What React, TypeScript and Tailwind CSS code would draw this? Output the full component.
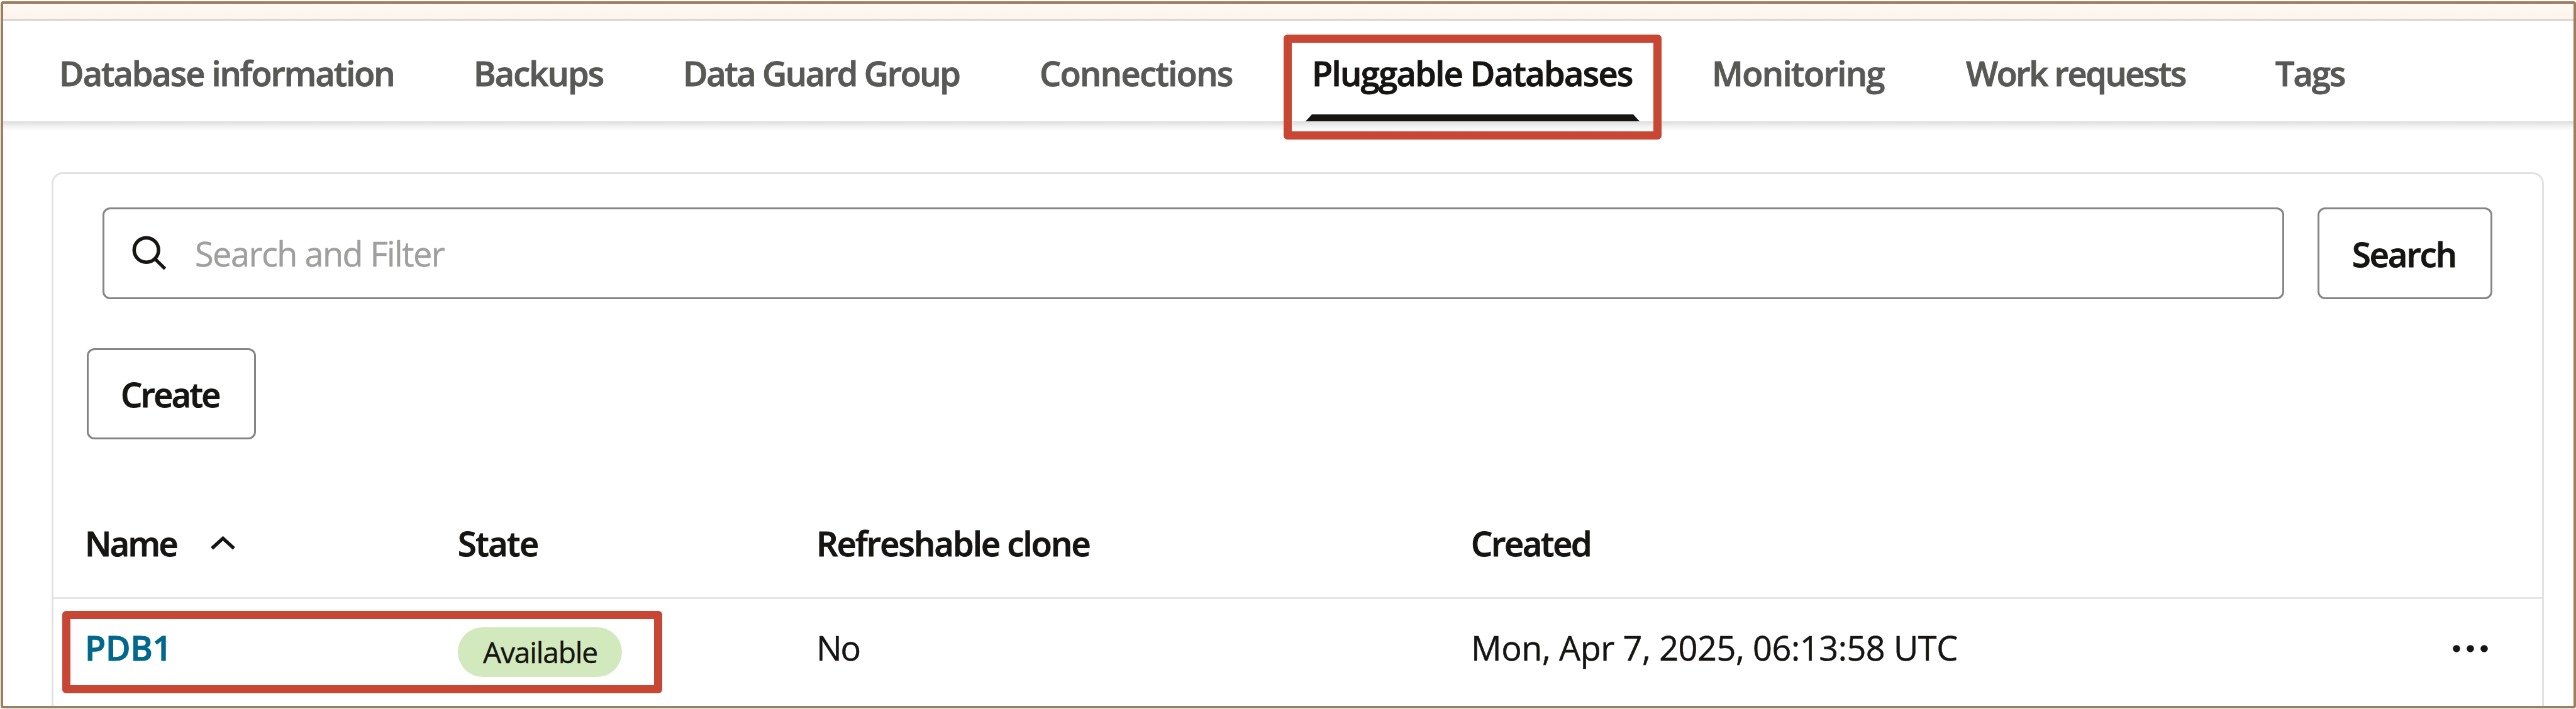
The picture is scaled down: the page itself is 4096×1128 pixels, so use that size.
const tabs = [
  { label: "Database information", style: "w-[659px] tracking-[-1.95px]" },
  { label: "Backups", style: "w-[333px] tracking-[-1.8px]" },
  { label: "Data Guard Group", style: "w-[567px] tracking-[-2.32px]" },
  { label: "Connections", style: "w-[433px] tracking-[-1.55px]" },
  { label: "Pluggable Databases", style: "w-[636px] tracking-[-1.58px]", active: true },
  { label: "Monitoring", style: "w-[404px] tracking-[-1.5px]" },
  { label: "Work requests", style: "w-[492px] tracking-[-2.36px]" },
  { label: "Tags", style: "w-[200px] tracking-[-1.92px]" },
];

const strong = "font-semibold [-webkit-text-stroke:1px_currentColor]";

function TabBar() {
  return (
    <nav className={`flex h-[160px] items-stretch bg-white pl-[89px] text-[#585957] ${strong}`}>
      {tabs.map((tab) => (
        <a
          key={tab.label}
          className={`relative block shrink-0 pt-[56px] whitespace-nowrap ${tab.style} ${tab.active ? "text-[#161513]" : ""}`}
        >
          {tab.label}
          {tab.active && (
            <span className="absolute bottom-0 left-[-10px] h-[11px] w-[531px] bg-[#161513] [clip-path:polygon(10px_0,521px_0,100%_100%,0_100%)]" />
          )}
        </a>
      ))}
    </nav>
  );
}

function SearchRow() {
  return (
    <div className="flex gap-[53px] pt-[53px] pl-[78px]">
      <div className="flex h-[146px] w-[3469px] items-center rounded-[12px] border-3 border-[#858585] pl-[44px]">
        <svg className="h-[56px] w-[56px] shrink-0" viewBox="0 0 56 56" fill="none" stroke="#161513" strokeWidth="5.6">
          <circle cx="22.7" cy="22.8" r="19.4" />
          <path d="M37 37.3 L52.4 52.7" strokeWidth="5.2" />
        </svg>
        <span className="ml-[44px] tracking-[-1.51px] text-[#9f9f9e]">Search and Filter</span>
      </div>
      <button className={`flex h-[146px] w-[278px] items-center rounded-[12px] border-3 border-[#858585] pt-px pl-[52px] tracking-[-1.9px] ${strong}`}>
        Search
      </button>
    </div>
  );
}

const columns = "grid grid-cols-[593px_570px_1041px_1fr_auto] items-start pl-[50px]";

function PdbTable() {
  return (
    <div>
      <div className={`h-[254px] border-b-3 border-[#e6e6e6] pt-[138px] ${strong} ${columns}`}>
        <div className="flex">
          <span className="tracking-[-2.55px]">Name</span>
          <svg className="mt-[15px] ml-[53px] h-[26px] w-[41px]" viewBox="0 0 41 26" fill="none" stroke="#161513" strokeWidth="5.6">
            <path d="M3 20.5 L20.5 4.5 L38 20.5" />
          </svg>
        </div>
        <span className="tracking-[-1.43px]">State</span>
        <span className="tracking-[-1.81px]">Refreshable clone</span>
        <span className="tracking-[-2.24px]">Created</span>
      </div>
      <div className={`pt-[45px] ${columns}`}>
        <a className={`mt-[5px] tracking-[-0.3px] text-[#00688c] ${strong}`}>PDB1</a>
        <span className="h-[79px] w-[261px] rounded-full bg-[#d1e9bd] pl-[40px] text-[46px] leading-[79px] tracking-[-1.11px]">
          Available
        </span>
        <span className="mt-[5px] tracking-[-2.06px]">No</span>
        <span className="mt-[5px] tracking-[-0.43px]">Mon, Apr 7, 2025, 06:13:58 UTC</span>
        <svg className="mt-[27px] mr-[85px] h-[14px] w-[58px]" viewBox="0 0 58 14" fill="#161513">
          <circle cx="7" cy="7" r="5.8" />
          <circle cx="29" cy="7" r="5.8" />
          <circle cx="51" cy="7" r="5.8" />
        </svg>
      </div>
    </div>
  );
}

export default function App() {
  return (
    <div className="h-[1128px] w-[4096px] overflow-hidden bg-white pt-[2px] pl-px font-['Open_Sans',sans-serif] text-[54px] leading-[54px] text-[#161513] [-webkit-text-stroke:0.5px_currentColor]">
      <div className="relative h-[1125px] w-[4095px] overflow-hidden rounded-[4px] border-4 border-[#9f7e5f]">
        <div className="h-[27px] border-b-3 border-[#dbd6ce] bg-linear-to-b from-[#fff9f3] to-[#fbf5ee]" />
        <TabBar />
        <div className="h-[15px] bg-linear-to-b from-[#dddddd] via-[#f0f0f0] to-white" />
        <main className="mt-[66px] ml-[77px] h-[849px] w-[3963px] rounded-t-[18px] border-3 border-b-0 border-[#e2e3e1]">
          <SearchRow />
          <button className={`mt-[78px] ml-[53px] flex h-[145px] w-[269px] items-center rounded-[12px] border-3 border-[#858585] pl-[51px] tracking-[-2.6px] ${strong}`}>
            Create
          </button>
          <PdbTable />
        </main>
        <div className="absolute top-[49px] left-[2036px] h-[167px] w-[601px] rounded-[6px] border-[13px] border-[#c74634]" />
        <div className="absolute top-[966px] left-[94px] h-[131px] w-[954px] rounded-[6px] border-[13px] border-[#c74634]" />
      </div>
    </div>
  );
}
